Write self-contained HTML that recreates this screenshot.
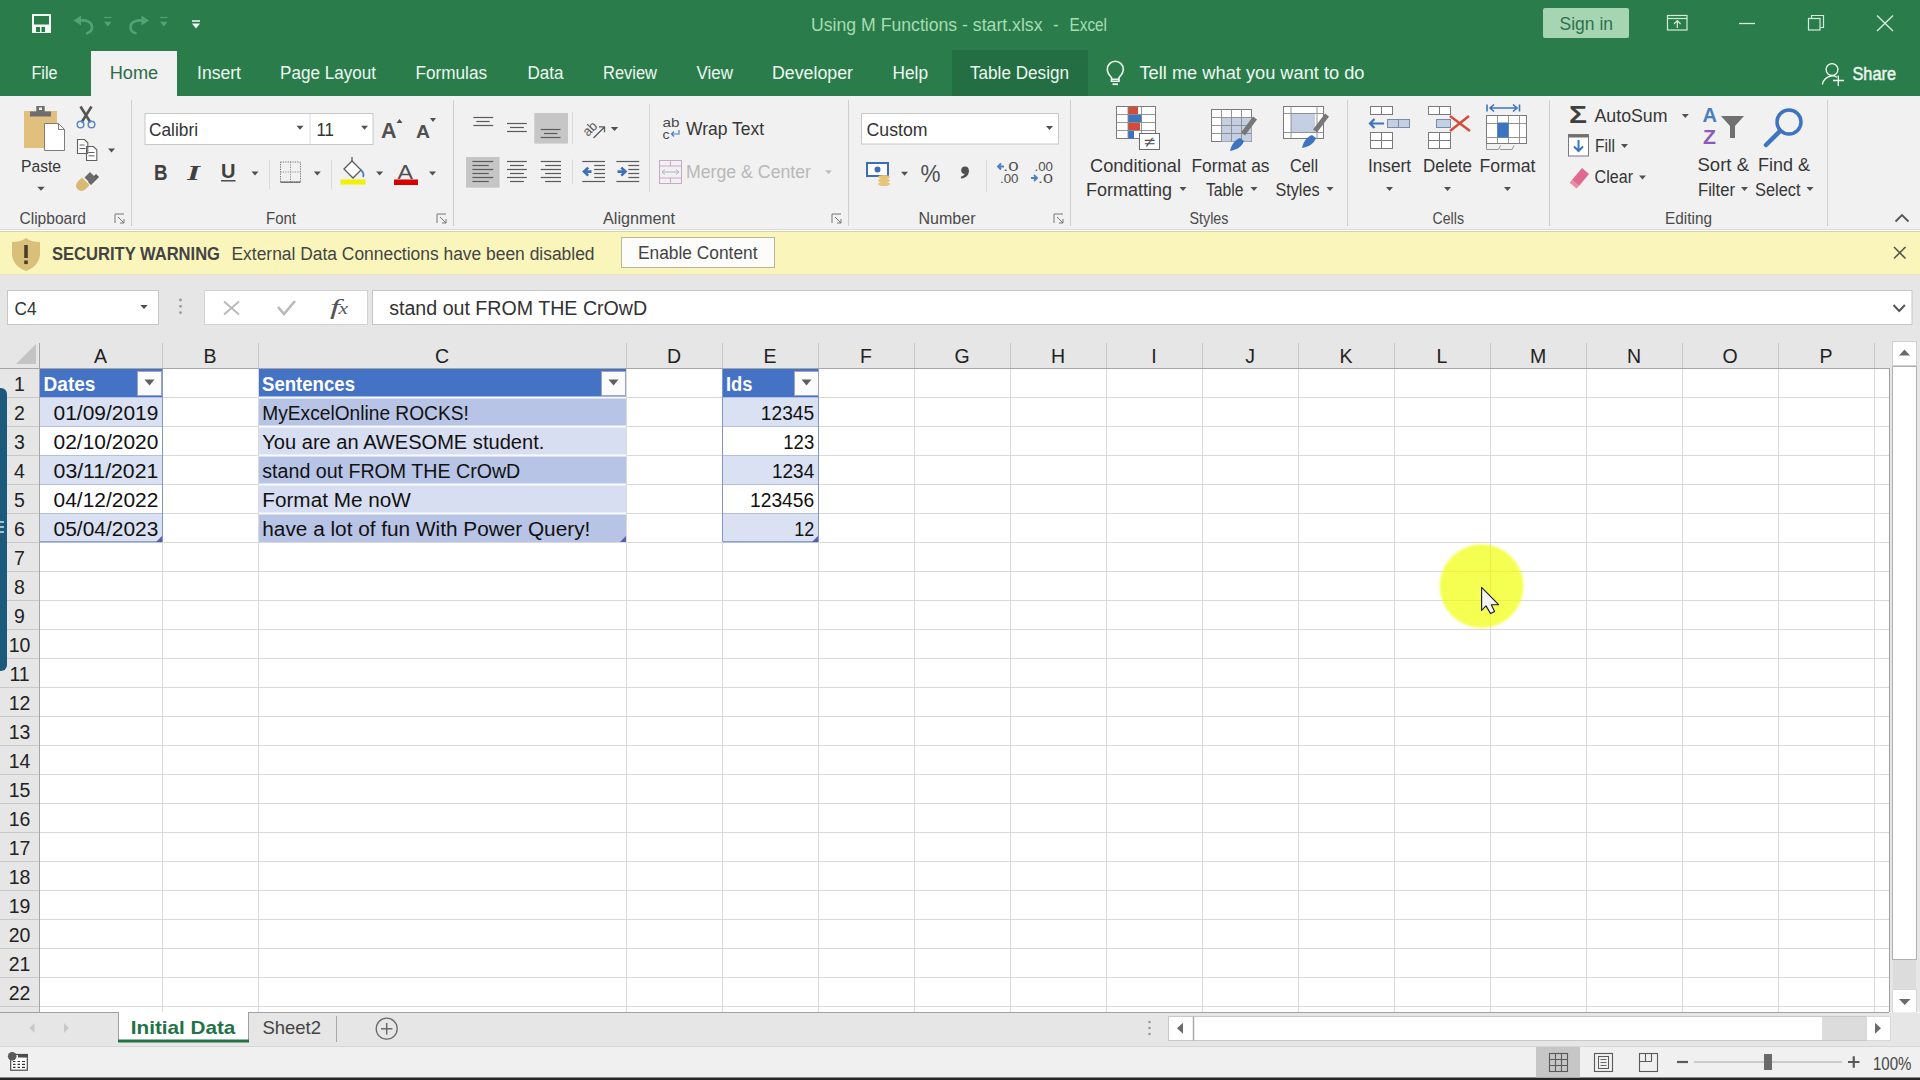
<!DOCTYPE html>
<html><head><meta charset="utf-8"><title>Excel</title>
<style>
html,body{margin:0;padding:0;width:1920px;height:1080px;overflow:hidden;background:#fff;}
svg{position:absolute;left:0;top:0;display:block;font-family:"Liberation Sans", sans-serif;}
</style></head><body>
<svg width="1920" height="1080" viewBox="0 0 1920 1080">
<defs><filter id="soft" x="-10%" y="-10%" width="120%" height="120%"><feGaussianBlur stdDeviation="0.8"/></filter></defs>
<rect x="0" y="0" width="1920" height="96" fill="#2a7d4b" />
<path d="M32 14 h19 v19 h-19 z" fill="#f4fbf6"/>
<rect x="34" y="16" width="15" height="8.5" fill="#2a7d4b" />
<rect x="36" y="27" width="9" height="5" fill="#2a7d4b" />
<rect x="40" y="27" width="1.5" height="5" fill="#f4fbf6" />
<path d="M80 20.5 C86.5 20 92 22 92 27 C92 31 89 33 86 33.5" fill="none" stroke="#52a273" stroke-width="2.6"/>
<path d="M73.5 20.5 L81 15.5 L81 25.5 Z" fill="#52a273"/>
<line x1="104" y1="17.5" x2="111.5" y2="17.5" stroke="#52a273" stroke-width="1.2"/>
<path d="M104.05 21.8 L111.55 21.8 L107.8 26.8 Z" fill="#52a273"/>
<path d="M142.5 20.5 C136 20 130.5 22 130.5 27 C130.5 31 133.5 33 136.5 33.5" fill="none" stroke="#52a273" stroke-width="2.6"/>
<path d="M149 20.5 L141.5 15.5 L141.5 25.5 Z" fill="#52a273"/>
<line x1="160" y1="17.5" x2="167.5" y2="17.5" stroke="#52a273" stroke-width="1.2"/>
<path d="M160.05 21.8 L167.55 21.8 L163.8 26.8 Z" fill="#52a273"/>
<line x1="192" y1="21" x2="200" y2="21" stroke="#f4fbf6" stroke-width="1.5"/>
<path d="M192.0 23.5 L200.0 23.5 L196 28.5 Z" fill="#f4fbf6"/>
<text x="811" y="30.5" font-size="18.5" fill="#a7dcb3" textLength="231.5" lengthAdjust="spacingAndGlyphs">Using M Functions - start.xlsx</text>
<text x="1053" y="30.5" font-size="18.5" fill="#a7dcb3" textLength="5.5" lengthAdjust="spacingAndGlyphs">-</text>
<text x="1069.5" y="30.5" font-size="18.5" fill="#a7dcb3" textLength="37.5" lengthAdjust="spacingAndGlyphs">Excel</text>
<rect x="1543" y="8" width="86" height="30" fill="#a6d5b3" rx="2"/>
<text x="1559.5" y="30" font-size="17.5" fill="#2f704a" textLength="53.5" lengthAdjust="spacingAndGlyphs">Sign in</text>
<rect x="1667.5" y="15.5" width="19.5" height="14.5" fill="none" stroke="#d2ecd9" stroke-width="1.2" />
<line x1="1667.5" y1="18.5" x2="1687" y2="18.5" stroke="#d2ecd9" stroke-width="1.2"/>
<path d="M1677.3 28 v-7 M1674 24 l3.3 -3.3 l3.3 3.3" fill="none" stroke="#d2ecd9" stroke-width="1.2"/>
<line x1="1739" y1="23.5" x2="1755" y2="23.5" stroke="#d2ecd9" stroke-width="1.3"/>
<rect x="1808.5" y="18.5" width="11.5" height="11.5" fill="none" stroke="#d2ecd9" stroke-width="1.2" />
<path d="M1811.5 18.5 v-3 h12 v12 h-3" fill="none" stroke="#d2ecd9" stroke-width="1.2"/>
<path d="M1877 15.5 L1893 31 M1893 15.5 L1877 31" stroke="#d2ecd9" stroke-width="1.4"/>
<rect x="91" y="51" width="86" height="45" fill="#f1f1f1" />
<rect x="952" y="50" width="136" height="46" fill="#236e42" />
<text x="31.5" y="78.7" font-size="17.5" fill="#eef8f1" textLength="26.0" lengthAdjust="spacingAndGlyphs">File</text>
<text x="197" y="78.7" font-size="17.5" fill="#eef8f1" textLength="44.0" lengthAdjust="spacingAndGlyphs">Insert</text>
<text x="280" y="78.7" font-size="17.5" fill="#eef8f1" textLength="96.0" lengthAdjust="spacingAndGlyphs">Page Layout</text>
<text x="415.5" y="78.7" font-size="17.5" fill="#eef8f1" textLength="71.5" lengthAdjust="spacingAndGlyphs">Formulas</text>
<text x="527.5" y="78.7" font-size="17.5" fill="#eef8f1" textLength="36.0" lengthAdjust="spacingAndGlyphs">Data</text>
<text x="603" y="78.7" font-size="17.5" fill="#eef8f1" textLength="54.0" lengthAdjust="spacingAndGlyphs">Review</text>
<text x="696.5" y="78.7" font-size="17.5" fill="#eef8f1" textLength="36.5" lengthAdjust="spacingAndGlyphs">View</text>
<text x="772" y="78.7" font-size="17.5" fill="#eef8f1" textLength="81.0" lengthAdjust="spacingAndGlyphs">Developer</text>
<text x="892.5" y="78.7" font-size="17.5" fill="#eef8f1" textLength="35.5" lengthAdjust="spacingAndGlyphs">Help</text>
<text x="970" y="78.7" font-size="17.5" fill="#eef8f1" textLength="99.0" lengthAdjust="spacingAndGlyphs">Table Design</text>
<text x="109.7" y="78.7" font-size="17.5" fill="#2d6b49" textLength="48.5" lengthAdjust="spacingAndGlyphs">Home</text>
<path d="M1111.5 77.5 C1109 75 1107.3 72.5 1107.3 69.3 A8 8 0 0 1 1123.3 69.3 C1123.3 72.5 1121.5 75 1119 77.5 V81.3 H1111.5 Z M1111.5 79.3 H1119" fill="none" stroke="#eef8f1" stroke-width="1.6"/>
<rect x="1112.5" y="83.3" width="5.5" height="1.8" fill="#eef8f1" />
<text x="1139.5" y="78.7" font-size="17.5" fill="#eef8f1" textLength="225.0" lengthAdjust="spacingAndGlyphs">Tell me what you want to do</text>
<circle cx="1832" cy="69.5" r="5.9" fill="none" stroke="#eef8f1" stroke-width="1.3"/>
<path d="M1822.3 84.5 C1823.5 79.5 1827 76.5 1831.5 76 C1833.5 75.8 1835.5 76.3 1837 77.3" fill="none" stroke="#eef8f1" stroke-width="1.3"/>
<path d="M1833 80.5 h11 M1838.3 75.4 v10.6" stroke="#eef8f1" stroke-width="1.3"/>
<text x="1852.5" y="79.6" font-size="18" fill="#eef8f1" textLength="43.5" lengthAdjust="spacingAndGlyphs" style="stroke:#eef8f1;stroke-width:0.45">Share</text>
<rect x="0" y="96" width="1920" height="134" fill="#f1f1f1" />
<line x1="0" y1="229.5" x2="1920" y2="229.5" stroke="#dcdcdc" stroke-width="1"/>
<line x1="131.5" y1="100" x2="131.5" y2="226" stroke="#cfcfcf" stroke-width="1"/>
<line x1="453.5" y1="100" x2="453.5" y2="226" stroke="#cfcfcf" stroke-width="1"/>
<line x1="848.5" y1="100" x2="848.5" y2="226" stroke="#cfcfcf" stroke-width="1"/>
<line x1="1070.5" y1="100" x2="1070.5" y2="226" stroke="#cfcfcf" stroke-width="1"/>
<line x1="1347.5" y1="100" x2="1347.5" y2="226" stroke="#cfcfcf" stroke-width="1"/>
<line x1="1549.5" y1="100" x2="1549.5" y2="226" stroke="#cfcfcf" stroke-width="1"/>
<line x1="1827.5" y1="100" x2="1827.5" y2="226" stroke="#cfcfcf" stroke-width="1"/>
<text x="19.5" y="223.7" font-size="16.2" fill="#4a4a4a" textLength="66.5" lengthAdjust="spacingAndGlyphs">Clipboard</text>
<text x="266" y="223.7" font-size="16.2" fill="#4a4a4a" textLength="30.0" lengthAdjust="spacingAndGlyphs">Font</text>
<text x="603" y="223.7" font-size="16.2" fill="#4a4a4a" textLength="72.0" lengthAdjust="spacingAndGlyphs">Alignment</text>
<text x="918.5" y="223.7" font-size="16.2" fill="#4a4a4a" textLength="57.0" lengthAdjust="spacingAndGlyphs">Number</text>
<text x="1189.5" y="223.7" font-size="16.2" fill="#4a4a4a" textLength="39.0" lengthAdjust="spacingAndGlyphs">Styles</text>
<text x="1432.5" y="223.7" font-size="16.2" fill="#4a4a4a" textLength="31.5" lengthAdjust="spacingAndGlyphs">Cells</text>
<text x="1665" y="223.7" font-size="16.2" fill="#4a4a4a" textLength="47.0" lengthAdjust="spacingAndGlyphs">Editing</text>
<path d="M115 223 v-9 h9 M118 217 l6 6 M124 219 v4 h-4" fill="none" stroke="#777" stroke-width="1"/>
<path d="M437 223 v-9 h9 M440 217 l6 6 M446 219 v4 h-4" fill="none" stroke="#777" stroke-width="1"/>
<path d="M832 223 v-9 h9 M835 217 l6 6 M841 219 v4 h-4" fill="none" stroke="#777" stroke-width="1"/>
<path d="M1054 223 v-9 h9 M1057 217 l6 6 M1063 219 v4 h-4" fill="none" stroke="#777" stroke-width="1"/>
<path d="M1895.5 221.5 l6.5 -6.5 l6.5 6.5" fill="none" stroke="#555" stroke-width="1.8"/>
<rect x="24" y="111" width="33" height="37" fill="#e1c07e" />
<rect x="30" y="111.5" width="21" height="5" fill="#6e6e6e" />
<rect x="36.3" y="106" width="8.4" height="6" fill="#6e6e6e" />
<rect x="39" y="107.5" width="3" height="2.5" fill="#f1f1f1" />
<path d="M44.5 123.5 h14 l6 6 v21 h-20 z" fill="#fff" stroke="#7d7d7d" stroke-width="1"/>
<path d="M58.5 123.5 v6 h6" fill="none" stroke="#7d7d7d" stroke-width="1"/>
<text x="21" y="172" font-size="17.2" fill="#363636" textLength="40.0" lengthAdjust="spacingAndGlyphs">Paste</text>
<path d="M37.25 186.8 L44.75 186.8 L41 190.8 Z" fill="#505050"/>
<path d="M80.5 106.5 L90.5 122.5 M91.5 106.5 L81.5 122.5" stroke="#555" stroke-width="2.6"/>
<circle cx="80.5" cy="124.5" r="3.3" fill="none" stroke="#5b87c5" stroke-width="1.5"/><circle cx="91.5" cy="124.5" r="3.3" fill="none" stroke="#5b87c5" stroke-width="1.5"/>
<path d="M77.5 139.5 h7 l3.3 3.3 v10.7 h-10.3 z M86.5 146.5 h7 l3.3 3.3 v10.7 h-10.3 z" fill="#fff" stroke="#606060" stroke-width="1.1"/>
<path d="M79.5 145 h5 M79.5 148.5 h6 M88.5 152.5 h6 M88.5 155.8 h6" stroke="#606060" stroke-width="1"/>
<path d="M108.0 148.5 L115.0 148.5 L111.5 152.5 Z" fill="#505050"/>
<path d="M89.5 183.5 l8 -8" stroke="#5a5a5a" stroke-width="4.2"/>
<path d="M84.5 177.5 l5.5 -5.5 l6.5 6.5 l-5.5 5.5 z" fill="#6a6a6a"/>
<path d="M76 186 c0 -3 3 -6 6 -8.5 l7.5 7.5 c-2.5 3 -5.5 6 -8.5 6 c-2 0 -5 -3 -5 -5 z" fill="#d9b873"/>
<rect x="145" y="113.5" width="228" height="31" fill="#fff" stroke="#c8c8c8" stroke-width="1" />
<line x1="310" y1="114" x2="310" y2="144" stroke="#d8d8d8" stroke-width="1"/>
<text x="149" y="135.8" font-size="17.5" fill="#333" textLength="49.0" lengthAdjust="spacingAndGlyphs">Calibri</text>
<path d="M296.5 125.8 L303.5 125.8 L300 129.8 Z" fill="#505050"/>
<text x="316.5" y="135.8" font-size="17.5" fill="#333" textLength="17.5" lengthAdjust="spacingAndGlyphs">11</text>
<path d="M361.0 125.8 L368.0 125.8 L364.5 129.8 Z" fill="#505050"/>
<text x="381" y="137.5" font-size="22" fill="#505050" font-weight="bold" textLength="15.5" lengthAdjust="spacingAndGlyphs">A</text>
<path d="M396.5 123 l3 -4 l3 4 z" fill="#505050"/>
<text x="416" y="137.5" font-size="18.5" fill="#505050" font-weight="bold" textLength="14.0" lengthAdjust="spacingAndGlyphs">A</text>
<path d="M430 118 l3 4 l3 -4 z" fill="#505050"/>
<text x="154" y="180" font-size="21.5" fill="#404040" font-weight="bold" textLength="13.5" lengthAdjust="spacingAndGlyphs">B</text>
<text x="187" y="180" font-size="21.5" fill="#404040" font-weight="bold" font-family='"Liberation Serif", serif' textLength="13.0" lengthAdjust="spacingAndGlyphs" style="font-style:italic">I</text>
<text x="221" y="178" font-size="20" fill="#404040" font-weight="bold" textLength="14.5" lengthAdjust="spacingAndGlyphs">U</text>
<line x1="221" y1="180.8" x2="235.5" y2="180.8" stroke="#404040" stroke-width="1.4"/>
<path d="M251.5 171.5 L258.5 171.5 L255 175.5 Z" fill="#505050"/>
<line x1="269.5" y1="160" x2="269.5" y2="189" stroke="#dadada" stroke-width="1"/>
<rect x="280.5" y="162" width="20" height="20" fill="none" stroke="#707070" stroke-width="1" stroke-dasharray="1.2 1.2"/>
<path d="M290.5 162 v20 M280.5 172 h20" stroke="#909090" stroke-width="1" stroke-dasharray="1.2 1.2"/>
<line x1="280.5" y1="182.2" x2="300.5" y2="182.2" stroke="#606060" stroke-width="1.2"/>
<path d="M313.8 171.5 L320.8 171.5 L317.3 175.5 Z" fill="#505050"/>
<line x1="331.5" y1="160" x2="331.5" y2="189" stroke="#dadada" stroke-width="1"/>
<path d="M344 169 l8 -8 l9 9 l-8 8 z" fill="#fff" stroke="#5a5a5a" stroke-width="1.3"/>
<path d="M352 161 v-4" stroke="#5a5a5a" stroke-width="1.3"/>
<path d="M361 170 c2 2 3 5 2 7" fill="none" stroke="#4a7ebf" stroke-width="1.8"/>
<rect x="340.5" y="179.5" width="25" height="5" fill="#f2f200" />
<path d="M376.1 171.5 L383.1 171.5 L379.6 175.5 Z" fill="#505050"/>
<text x="397.5" y="178.5" font-size="20.5" fill="#505050" textLength="15.5" lengthAdjust="spacingAndGlyphs">A</text>
<rect x="394" y="179.5" width="24" height="5.5" fill="#d90000" />
<path d="M429.0 171.5 L436.0 171.5 L432.5 175.5 Z" fill="#505050"/>
<path d="M473.4 117.5 H493.2" stroke="#5a5a5a" stroke-width="1.2"/><path d="M476.3 121.5 H489.7" stroke="#5a5a5a" stroke-width="1.2"/><path d="M473.4 125.5 H493.2" stroke="#5a5a5a" stroke-width="1.2"/>
<path d="M507 123.5 H526.8" stroke="#5a5a5a" stroke-width="1.2"/><path d="M510 127.5 H523.9" stroke="#5a5a5a" stroke-width="1.2"/><path d="M507 131.5 H526.8" stroke="#5a5a5a" stroke-width="1.2"/>
<rect x="534.3" y="113" width="33.7" height="30.6" fill="#c6c6c6" />
<path d="M540.7 129.5 H560.5" stroke="#5a5a5a" stroke-width="1.2"/><path d="M544 133.5 H557.5" stroke="#5a5a5a" stroke-width="1.2"/><path d="M540.7 137.5 H560.5" stroke="#5a5a5a" stroke-width="1.2"/>
<line x1="572.5" y1="112" x2="572.5" y2="144" stroke="#dadada" stroke-width="1"/>
<text x="588" y="137" font-size="13.5" fill="#5a5a5a" textLength="14.5" lengthAdjust="spacingAndGlyphs" transform="rotate(-45 588 137)">ab</text>
<path d="M593.5 138 L604 127.5 M599 126.8 h5.5 v5.5" fill="none" stroke="#5a5a5a" stroke-width="1.3"/>
<path d="M610.75 127.0 L618.25 127.0 L614.5 131.0 Z" fill="#505050"/>
<line x1="649.5" y1="104" x2="649.5" y2="192" stroke="#dadada" stroke-width="1"/>
<text x="662.5" y="127" font-size="13.5" fill="#4a4a4a" textLength="17.0" lengthAdjust="spacingAndGlyphs">ab</text>
<text x="662.5" y="138.5" font-size="13.5" fill="#4a4a4a" textLength="7.0" lengthAdjust="spacingAndGlyphs">c</text>
<path d="M679 130 v4 h-7 M674 131.5 l-2.5 2.5 l2.5 2.5" fill="none" stroke="#4a7ebf" stroke-width="1.2"/>
<text x="686" y="135" font-size="17.5" fill="#363636" textLength="78.0" lengthAdjust="spacingAndGlyphs">Wrap Text</text>
<rect x="466" y="157" width="33.6" height="30.7" fill="#c6c6c6" />
<path d="M472.4 161.5 H493.2" stroke="#5a5a5a" stroke-width="1.2"/>
<path d="M507 161.5 H526.8" stroke="#5a5a5a" stroke-width="1.2"/>
<path d="M540.7 161.5 H561" stroke="#5a5a5a" stroke-width="1.2"/>
<path d="M582.3 161.5 H605" stroke="#5a5a5a" stroke-width="1.2"/>
<path d="M616.4 161.5 H639.2" stroke="#5a5a5a" stroke-width="1.2"/>
<path d="M472.4 165.5 H488.7" stroke="#5a5a5a" stroke-width="1.2"/>
<path d="M510 165.5 H523.9" stroke="#5a5a5a" stroke-width="1.2"/>
<path d="M545.1 165.5 H561" stroke="#5a5a5a" stroke-width="1.2"/>
<path d="M594.2 165.5 H605" stroke="#5a5a5a" stroke-width="1.2"/>
<path d="M628.3 165.5 H639.2" stroke="#5a5a5a" stroke-width="1.2"/>
<path d="M472.4 169.5 H493.2" stroke="#5a5a5a" stroke-width="1.2"/>
<path d="M507 169.5 H526.8" stroke="#5a5a5a" stroke-width="1.2"/>
<path d="M540.7 169.5 H561" stroke="#5a5a5a" stroke-width="1.2"/>
<path d="M594.2 169.5 H605" stroke="#5a5a5a" stroke-width="1.2"/>
<path d="M628.3 169.5 H639.2" stroke="#5a5a5a" stroke-width="1.2"/>
<path d="M472.4 173.5 H488.7" stroke="#5a5a5a" stroke-width="1.2"/>
<path d="M510 173.5 H523.9" stroke="#5a5a5a" stroke-width="1.2"/>
<path d="M545.1 173.5 H561" stroke="#5a5a5a" stroke-width="1.2"/>
<path d="M594.2 173.5 H605" stroke="#5a5a5a" stroke-width="1.2"/>
<path d="M628.3 173.5 H639.2" stroke="#5a5a5a" stroke-width="1.2"/>
<path d="M472.4 177.5 H493.2" stroke="#5a5a5a" stroke-width="1.2"/>
<path d="M507 177.5 H526.8" stroke="#5a5a5a" stroke-width="1.2"/>
<path d="M540.7 177.5 H561" stroke="#5a5a5a" stroke-width="1.2"/>
<path d="M594.2 177.5 H605" stroke="#5a5a5a" stroke-width="1.2"/>
<path d="M628.3 177.5 H639.2" stroke="#5a5a5a" stroke-width="1.2"/>
<path d="M472.4 181.5 H488.7" stroke="#5a5a5a" stroke-width="1.2"/>
<path d="M510 181.5 H523.9" stroke="#5a5a5a" stroke-width="1.2"/>
<path d="M545.1 181.5 H561" stroke="#5a5a5a" stroke-width="1.2"/>
<path d="M582.3 181.5 H605" stroke="#5a5a5a" stroke-width="1.2"/>
<path d="M616.4 181.5 H639.2" stroke="#5a5a5a" stroke-width="1.2"/>
<line x1="572.5" y1="159.5" x2="572.5" y2="184" stroke="#dadada" stroke-width="1"/>
<path d="M591.5 171.6 h-6 M588.2 167.6 l-4.2 4 l4.2 4" fill="none" stroke="#3f6fb5" stroke-width="2.6"/>
<path d="M617.5 171.6 h6 M621.3 167.6 l4.2 4 l-4.2 4" fill="none" stroke="#3f6fb5" stroke-width="2.6"/>
<rect x="659.5" y="160.5" width="22" height="23" fill="none" stroke="#c8a8c8" stroke-width="1"/>
<path d="M659.5 166 h22 M659.5 178 h22 M670.5 160.5 v5.5 M670.5 178 v5.5" stroke="#c8a8c8" stroke-width="1"/>
<path d="M662 172 h17 M665 169.5 l-3 2.5 l3 2.5 M676 169.5 l3 2.5 l-3 2.5" fill="none" stroke="#b0b0c8" stroke-width="1"/>
<text x="686" y="178.2" font-size="17.5" fill="#b8b8b8" textLength="125.0" lengthAdjust="spacingAndGlyphs">Merge &amp; Center</text>
<path d="M825.0 170.3 L832.0 170.3 L828.5 174.3 Z" fill="#c0c0c0"/>
<rect x="861.5" y="113.5" width="197" height="30.5" fill="#fff" stroke="#c8c8c8" stroke-width="1" />
<text x="866.5" y="135.6" font-size="17.5" fill="#333" textLength="61.0" lengthAdjust="spacingAndGlyphs">Custom</text>
<path d="M1046.0 126.0 L1053.0 126.0 L1049.5 130.0 Z" fill="#505050"/>
<rect x="867" y="163" width="21" height="13" fill="#fff" stroke="#3c6db5" stroke-width="2" />
<circle cx="877.5" cy="169.5" r="3" fill="#3c6db5"/>
<ellipse cx="884" cy="177" rx="6" ry="2" fill="#e8c47a"/><ellipse cx="884" cy="180.5" rx="6" ry="2" fill="#e8c47a"/><ellipse cx="884" cy="184" rx="6" ry="2" fill="#e8c47a"/>
<path d="M901.0 171.8 L908.0 171.8 L904.5 175.8 Z" fill="#505050"/>
<text x="920.5" y="182.2" font-size="24" fill="#505050" textLength="20.0" lengthAdjust="spacingAndGlyphs">%</text>
<circle cx="965" cy="170.3" r="3.8" fill="#505050"/><path d="M968.6 170 C969.5 174.5 966.5 177.8 961.2 178.6 L960.8 176.8 C963.8 175.8 965.5 174 965.5 171.5 Z" fill="#505050"/>
<line x1="986.5" y1="160" x2="986.5" y2="192" stroke="#dadada" stroke-width="1"/>
<text x="1003" y="171.2" font-size="12.5" fill="#505050" textLength="15.5" lengthAdjust="spacingAndGlyphs">.0</text>
<path d="M1004 166.5 h-6 M1001 163.5 l-3 3 l3 3" fill="none" stroke="#4a7ebf" stroke-width="1.8"/>
<text x="1000" y="182.9" font-size="12.5" fill="#505050" textLength="18.5" lengthAdjust="spacingAndGlyphs">.00</text>
<text x="1034.5" y="171.2" font-size="12.5" fill="#505050" textLength="18.5" lengthAdjust="spacingAndGlyphs">.00</text>
<path d="M1031 178 h6 M1034 175 l3 3 l-3 3" fill="none" stroke="#4a7ebf" stroke-width="1.8"/>
<text x="1038" y="182.9" font-size="12.5" fill="#505050" textLength="15.0" lengthAdjust="spacingAndGlyphs">.0</text>
<rect x="1116.5" y="106.5" width="39" height="32" fill="#fff" stroke="#7a7a7a" stroke-width="1"/>
<rect x="1128" y="107" width="10" height="7.5" fill="#d24b3b" />
<rect x="1128" y="114.5" width="14" height="8" fill="#3d74c0" />
<rect x="1128" y="122.5" width="12" height="8" fill="#d24b3b" />
<rect x="1128" y="130.5" width="6" height="8" fill="#3d74c0" />
<path d="M1116.5 114.5 h39 M1116.5 122.5 h39 M1116.5 130.5 h39 M1128 106.5 v32 M1141.5 106.5 v32" stroke="#8a8a8a" stroke-width="0.9"/>
<rect x="1139.5" y="133.5" width="20" height="16" fill="#fff" stroke="#6a6a6a" stroke-width="1"/>
<text x="1144" y="146.5" font-size="15" fill="#505050" textLength="11.0" lengthAdjust="spacingAndGlyphs">≠</text>
<text x="1090" y="171.5" font-size="17.5" fill="#363636" textLength="91.0" lengthAdjust="spacingAndGlyphs">Conditional</text>
<text x="1086" y="195.5" font-size="17.5" fill="#363636" textLength="86.0" lengthAdjust="spacingAndGlyphs">Formatting</text>
<path d="M1179.5 187.0 L1186.5 187.0 L1183 191.0 Z" fill="#505050"/>
<rect x="1211.5" y="109.5" width="40" height="32" fill="#fff" stroke="#7a7a7a" stroke-width="1"/>
<rect x="1221.5" y="117.5" width="30" height="24" fill="#c5cfe3" />
<path d="M1211.5 117.5 h40 M1211.5 125.5 h40 M1211.5 133.5 h40 M1221.5 109.5 v32 M1231.5 109.5 v32 M1241.5 109.5 v32" stroke="#8a8a8a" stroke-width="0.9"/>
<path d="M1255 118 l-12 16" stroke="#777" stroke-width="5"/>
<path d="M1240 138 c-6 2 -9 8 -10 13 c6 -1 12 -4 14 -10 z" fill="#3d74c0"/>
<text x="1191.5" y="171.5" font-size="17.5" fill="#363636" textLength="78.0" lengthAdjust="spacingAndGlyphs">Format as</text>
<text x="1206" y="195.5" font-size="17.5" fill="#363636" textLength="37.5" lengthAdjust="spacingAndGlyphs">Table</text>
<path d="M1250.5 187.0 L1257.5 187.0 L1254 191.0 Z" fill="#505050"/>
<rect x="1283.5" y="106.5" width="40" height="32" fill="#fff" stroke="#7a7a7a" stroke-width="1"/>
<rect x="1291" y="113" width="24" height="20" fill="#c5cfe3" />
<path d="M1283.5 113.5 h40 M1283.5 132.5 h40 M1291 106.5 v32 M1317 106.5 v32" stroke="#8a8a8a" stroke-width="0.9"/>
<path d="M1327 115 l-12 16" stroke="#777" stroke-width="5"/>
<path d="M1312 135 c-6 2 -9 8 -10 13 c6 -1 12 -4 14 -10 z" fill="#3d74c0"/>
<text x="1290" y="171.5" font-size="17.5" fill="#363636" textLength="28.0" lengthAdjust="spacingAndGlyphs">Cell</text>
<text x="1275.5" y="195.5" font-size="17.5" fill="#363636" textLength="44.0" lengthAdjust="spacingAndGlyphs">Styles</text>
<path d="M1326.5 187.0 L1333.5 187.0 L1330 191.0 Z" fill="#505050"/>
<rect x="1370.5" y="106.5" width="22" height="8" fill="#fff" stroke="#7a7a7a" stroke-width="1"/><path d="M1381.5 106.5 v8" stroke="#7a7a7a" stroke-width="1"/>
<rect x="1370.5" y="132.5" width="22" height="16" fill="#fff" stroke="#7a7a7a" stroke-width="1"/><path d="M1381.5 132.5 v16 M1370.5 140.5 h22" stroke="#7a7a7a" stroke-width="1"/>
<rect x="1387.5" y="119.5" width="22" height="8" fill="#c5cfe3" stroke="#7a8aa8" stroke-width="1"/><path d="M1398.5 119.5 v8" stroke="#7a8aa8"/>
<path d="M1384 123.5 h-14 M1374.5 119 l-4.5 4.5 l4.5 4.5" fill="none" stroke="#3d74c0" stroke-width="2.2"/>
<text x="1368" y="171.8" font-size="17.5" fill="#363636" textLength="43.0" lengthAdjust="spacingAndGlyphs">Insert</text>
<path d="M1386.0 187.0 L1393.0 187.0 L1389.5 191.0 Z" fill="#505050"/>
<rect x="1428.5" y="106.5" width="22" height="8" fill="#fff" stroke="#7a7a7a" stroke-width="1"/><path d="M1439.5 106.5 v8" stroke="#7a7a7a" stroke-width="1"/>
<rect x="1428.5" y="132.5" width="22" height="16" fill="#fff" stroke="#7a7a7a" stroke-width="1"/><path d="M1439.5 132.5 v16 M1428.5 140.5 h22" stroke="#7a7a7a" stroke-width="1"/>
<rect x="1436.5" y="119.5" width="14" height="8" fill="#c5cfe3" stroke="#7a8aa8" stroke-width="1"/>
<path d="M1450 116 l20 15 M1469 116 l-19 15" stroke="#d24b3b" stroke-width="2.4"/>
<text x="1423" y="171.8" font-size="17.5" fill="#363636" textLength="49.0" lengthAdjust="spacingAndGlyphs">Delete</text>
<path d="M1444.0 187.0 L1451.0 187.0 L1447.5 191.0 Z" fill="#505050"/>
<rect x="1486.5" y="115.5" width="40" height="28" fill="#fff" stroke="#7a7a7a" stroke-width="1"/>
<path d="M1486.5 123.5 h40 M1486.5 137.5 h40 M1497.5 115.5 v28 M1508.5 115.5 v28 M1519.5 115.5 v28" stroke="#8a8a8a" stroke-width="0.9"/>
<rect x="1497.5" y="122.5" width="11" height="15" fill="#3d74c0" />
<path d="M1486.5 143.5 v6 h12 l2 -4 M1500 149.5 h12 l2 -4" fill="none" stroke="#8a8a8a" stroke-width="0.9"/>
<path d="M1487 104.5 v7 M1519.5 104.5 v7 M1490 108 h27 M1494 104.5 l-4 3.5 l4 3.5 M1513 104.5 l4 3.5 l-4 3.5" fill="none" stroke="#3d74c0" stroke-width="1.6"/>
<text x="1479.5" y="171.8" font-size="17.5" fill="#363636" textLength="56.0" lengthAdjust="spacingAndGlyphs">Format</text>
<path d="M1504.0 187.0 L1511.0 187.0 L1507.5 191.0 Z" fill="#505050"/>
<text x="1569" y="123.3" font-size="23" fill="#404040" font-weight="bold" textLength="18.0" lengthAdjust="spacingAndGlyphs">Σ</text>
<text x="1594.5" y="121.7" font-size="17.5" fill="#363636" textLength="73.0" lengthAdjust="spacingAndGlyphs">AutoSum</text>
<path d="M1681.8 114.0 L1688.8 114.0 L1685.3 118.0 Z" fill="#505050"/>
<rect x="1568.5" y="134.5" width="20" height="21.5" fill="#fff" stroke="#7a7a7a" stroke-width="1"/>
<rect x="1568.5" y="134.5" width="20" height="3" fill="#707070" />
<path d="M1578.5 140 v11 M1574 146.5 l4.5 4.5 l4.5 -4.5" fill="none" stroke="#3d74c0" stroke-width="2"/>
<text x="1595" y="152.4" font-size="17.5" fill="#363636" textLength="20.0" lengthAdjust="spacingAndGlyphs">Fill</text>
<path d="M1621.0 144.0 L1628.0 144.0 L1624.5 148.0 Z" fill="#505050"/>
<path d="M1572 180 l10 -12 l7 6 l-10 12 z" fill="#e06a8f"/><path d="M1572 180 l7 6 l-2.5 2.5 l-7 -6 z" fill="#e88aa8"/>
<text x="1594.5" y="183.1" font-size="17.5" fill="#363636" textLength="38.5" lengthAdjust="spacingAndGlyphs">Clear</text>
<path d="M1639.0 175.5 L1646.0 175.5 L1642.5 179.5 Z" fill="#505050"/>
<text x="1702.5" y="122" font-size="20" fill="#4a7ebf" font-weight="bold" textLength="14.5" lengthAdjust="spacingAndGlyphs">A</text>
<text x="1703" y="143.5" font-size="20" fill="#8a5cb8" font-weight="bold" textLength="13.0" lengthAdjust="spacingAndGlyphs">Z</text>
<path d="M1721 116 h23 l-9 10 v12 h-5 v-12 z" fill="#707070"/>
<text x="1697.5" y="171.2" font-size="17.5" fill="#363636" textLength="51.5" lengthAdjust="spacingAndGlyphs">Sort &amp;</text>
<text x="1698" y="195.5" font-size="17.5" fill="#363636" textLength="37.0" lengthAdjust="spacingAndGlyphs">Filter</text>
<path d="M1741.0 187.0 L1748.0 187.0 L1744.5 191.0 Z" fill="#505050"/>
<circle cx="1789" cy="122" r="12" fill="none" stroke="#3d74c0" stroke-width="3.5"/>
<path d="M1780 131 l-14 14" stroke="#3d74c0" stroke-width="4.5" stroke-linecap="round"/>
<text x="1758" y="171.2" font-size="17.5" fill="#363636" textLength="52.0" lengthAdjust="spacingAndGlyphs">Find &amp;</text>
<text x="1755" y="195.5" font-size="17.5" fill="#363636" textLength="45.5" lengthAdjust="spacingAndGlyphs">Select</text>
<path d="M1806.5 187.0 L1813.5 187.0 L1810 191.0 Z" fill="#505050"/>
<rect x="0" y="231" width="1920" height="44" fill="#faf6bb" />
<line x1="0" y1="231.5" x2="1920" y2="231.5" stroke="#d6d3a6" stroke-width="1"/>
<line x1="0" y1="274.5" x2="1920" y2="274.5" stroke="#e9e6c2" stroke-width="1"/>
<path d="M26 238 c-4 3 -9 4 -14 4 v12 c0 8 6 14 14 17 c8 -3 14 -9 14 -17 v-12 c-5 0 -10 -1 -14 -4 z" fill="#d8bf7a"/>
<rect x="24.2" y="245" width="3.6" height="13" fill="#4b3e28" />
<rect x="24.2" y="260.5" width="3.6" height="3.6" fill="#4b3e28" />
<text x="52" y="259.8" font-size="18" fill="#444" font-weight="bold" textLength="168.0" lengthAdjust="spacingAndGlyphs">SECURITY WARNING</text>
<text x="231.5" y="259.5" font-size="18" fill="#444" textLength="363.0" lengthAdjust="spacingAndGlyphs">External Data Connections have been disabled</text>
<rect x="621.5" y="237.5" width="153" height="30" fill="#fcfcfa" stroke="#b9b69c" stroke-width="1" />
<text x="638" y="258.8" font-size="18" fill="#444" textLength="119.5" lengthAdjust="spacingAndGlyphs">Enable Content</text>
<path d="M1894 247 l11.5 11.5 M1905.5 247 l-11.5 11.5" stroke="#555" stroke-width="1.6"/>
<rect x="0" y="275" width="1920" height="737" fill="#e6e6e6" />
<rect x="7.5" y="290.5" width="151" height="34" fill="#fff" stroke="#c6c6c6" stroke-width="1" />
<text x="14.5" y="314.5" font-size="19" fill="#333" textLength="22.0" lengthAdjust="spacingAndGlyphs">C4</text>
<path d="M140.25 305.0 L147.75 305.0 L144 309.0 Z" fill="#505050"/>
<circle cx="180.5" cy="300" r="1.4" fill="#9a9a9a"/>
<circle cx="180.5" cy="306.3" r="1.4" fill="#9a9a9a"/>
<circle cx="180.5" cy="312.6" r="1.4" fill="#9a9a9a"/>
<rect x="204.5" y="290.5" width="163" height="34" fill="#fff" stroke="#d2d2d2" stroke-width="1" />
<path d="M224 301.5 l15 13 M239 301.5 l-15 13" stroke="#b9b9b9" stroke-width="1.8"/>
<path d="M278 307 l6 7 l11 -13" fill="none" stroke="#b9b9b9" stroke-width="2.6"/>
<text x="330" y="314" font-size="21" fill="#555" font-family='"Liberation Serif", serif' textLength="10.0" lengthAdjust="spacingAndGlyphs" style="font-style:italic">f</text>
<text x="338.5" y="314" font-size="16" fill="#555" font-family='"Liberation Serif", serif' textLength="9.5" lengthAdjust="spacingAndGlyphs" style="font-style:italic">x</text>
<rect x="372.5" y="290.5" width="1539.5" height="34" fill="#fff" stroke="#c6c6c6" stroke-width="1" />
<text x="389.2" y="315.3" font-size="19.5" fill="#333" textLength="258.0" lengthAdjust="spacingAndGlyphs">stand out FROM THE CrOwD</text>
<path d="M1893.5 305 l5.7 6 l5.7 -6" fill="none" stroke="#555" stroke-width="2"/>
<rect x="39" y="368" width="1850" height="644" fill="#fff" />
<line x1="39" y1="397.5" x2="1889" y2="397.5" stroke="#d9d9d9" stroke-width="1"/>
<line x1="39" y1="426.5" x2="1889" y2="426.5" stroke="#d9d9d9" stroke-width="1"/>
<line x1="39" y1="455.5" x2="1889" y2="455.5" stroke="#d9d9d9" stroke-width="1"/>
<line x1="39" y1="484.5" x2="1889" y2="484.5" stroke="#d9d9d9" stroke-width="1"/>
<line x1="39" y1="513.5" x2="1889" y2="513.5" stroke="#d9d9d9" stroke-width="1"/>
<line x1="39" y1="542.5" x2="1889" y2="542.5" stroke="#d9d9d9" stroke-width="1"/>
<line x1="39" y1="571.5" x2="1889" y2="571.5" stroke="#d9d9d9" stroke-width="1"/>
<line x1="39" y1="600.5" x2="1889" y2="600.5" stroke="#d9d9d9" stroke-width="1"/>
<line x1="39" y1="629.5" x2="1889" y2="629.5" stroke="#d9d9d9" stroke-width="1"/>
<line x1="39" y1="658.5" x2="1889" y2="658.5" stroke="#d9d9d9" stroke-width="1"/>
<line x1="39" y1="687.5" x2="1889" y2="687.5" stroke="#d9d9d9" stroke-width="1"/>
<line x1="39" y1="716.5" x2="1889" y2="716.5" stroke="#d9d9d9" stroke-width="1"/>
<line x1="39" y1="745.5" x2="1889" y2="745.5" stroke="#d9d9d9" stroke-width="1"/>
<line x1="39" y1="774.5" x2="1889" y2="774.5" stroke="#d9d9d9" stroke-width="1"/>
<line x1="39" y1="803.5" x2="1889" y2="803.5" stroke="#d9d9d9" stroke-width="1"/>
<line x1="39" y1="832.5" x2="1889" y2="832.5" stroke="#d9d9d9" stroke-width="1"/>
<line x1="39" y1="861.5" x2="1889" y2="861.5" stroke="#d9d9d9" stroke-width="1"/>
<line x1="39" y1="890.5" x2="1889" y2="890.5" stroke="#d9d9d9" stroke-width="1"/>
<line x1="39" y1="919.5" x2="1889" y2="919.5" stroke="#d9d9d9" stroke-width="1"/>
<line x1="39" y1="948.5" x2="1889" y2="948.5" stroke="#d9d9d9" stroke-width="1"/>
<line x1="39" y1="977.5" x2="1889" y2="977.5" stroke="#d9d9d9" stroke-width="1"/>
<line x1="39" y1="1006.5" x2="1889" y2="1006.5" stroke="#d9d9d9" stroke-width="1"/>
<line x1="162.5" y1="368" x2="162.5" y2="1012" stroke="#d9d9d9" stroke-width="1"/>
<line x1="258.5" y1="368" x2="258.5" y2="1012" stroke="#d9d9d9" stroke-width="1"/>
<line x1="626.5" y1="368" x2="626.5" y2="1012" stroke="#d9d9d9" stroke-width="1"/>
<line x1="722.5" y1="368" x2="722.5" y2="1012" stroke="#d9d9d9" stroke-width="1"/>
<line x1="818.5" y1="368" x2="818.5" y2="1012" stroke="#d9d9d9" stroke-width="1"/>
<line x1="914.5" y1="368" x2="914.5" y2="1012" stroke="#d9d9d9" stroke-width="1"/>
<line x1="1010.5" y1="368" x2="1010.5" y2="1012" stroke="#d9d9d9" stroke-width="1"/>
<line x1="1106.5" y1="368" x2="1106.5" y2="1012" stroke="#d9d9d9" stroke-width="1"/>
<line x1="1202.5" y1="368" x2="1202.5" y2="1012" stroke="#d9d9d9" stroke-width="1"/>
<line x1="1298.5" y1="368" x2="1298.5" y2="1012" stroke="#d9d9d9" stroke-width="1"/>
<line x1="1394.5" y1="368" x2="1394.5" y2="1012" stroke="#d9d9d9" stroke-width="1"/>
<line x1="1490.5" y1="368" x2="1490.5" y2="1012" stroke="#d9d9d9" stroke-width="1"/>
<line x1="1586.5" y1="368" x2="1586.5" y2="1012" stroke="#d9d9d9" stroke-width="1"/>
<line x1="1682.5" y1="368" x2="1682.5" y2="1012" stroke="#d9d9d9" stroke-width="1"/>
<line x1="1778.5" y1="368" x2="1778.5" y2="1012" stroke="#d9d9d9" stroke-width="1"/>
<line x1="1874.5" y1="368" x2="1874.5" y2="1012" stroke="#d9d9d9" stroke-width="1"/>
<rect x="40" y="369" width="122" height="28" fill="#4472c4" />
<rect x="259" y="369" width="367" height="28" fill="#4472c4" />
<rect x="723" y="369" width="95" height="28" fill="#4472c4" />
<rect x="40" y="398" width="122" height="28" fill="#d9e1f2" />
<rect x="723" y="398" width="95" height="28" fill="#d9e1f2" />
<rect x="259" y="398" width="367" height="28" fill="#b7c4e6" />
<rect x="259" y="396.5" width="367" height="2" fill="#fafbff" />
<rect x="259" y="427" width="367" height="28" fill="#d8def2" />
<rect x="259" y="425.5" width="367" height="2" fill="#fafbff" />
<rect x="40" y="456" width="122" height="28" fill="#d9e1f2" />
<rect x="723" y="456" width="95" height="28" fill="#d9e1f2" />
<rect x="259" y="456" width="367" height="28" fill="#b7c4e6" />
<rect x="259" y="454.5" width="367" height="2" fill="#fafbff" />
<rect x="259" y="485" width="367" height="28" fill="#d8def2" />
<rect x="259" y="483.5" width="367" height="2" fill="#fafbff" />
<rect x="40" y="514" width="122" height="28" fill="#d9e1f2" />
<rect x="723" y="514" width="95" height="28" fill="#d9e1f2" />
<rect x="259" y="514" width="367" height="28" fill="#b7c4e6" />
<rect x="259" y="512.5" width="367" height="2" fill="#fafbff" />
<line x1="162.5" y1="368" x2="162.5" y2="542" stroke="#8497c9" stroke-width="1"/>
<line x1="722.5" y1="368" x2="722.5" y2="542" stroke="#8497c9" stroke-width="1"/>
<line x1="818.5" y1="368" x2="818.5" y2="542" stroke="#8497c9" stroke-width="1"/>
<line x1="40" y1="397.5" x2="162" y2="397.5" stroke="#b4bfdf" stroke-width="1"/>
<line x1="723" y1="397.5" x2="818" y2="397.5" stroke="#b4bfdf" stroke-width="1"/>
<line x1="40" y1="426.5" x2="162" y2="426.5" stroke="#b4bfdf" stroke-width="1"/>
<line x1="723" y1="426.5" x2="818" y2="426.5" stroke="#b4bfdf" stroke-width="1"/>
<line x1="40" y1="455.5" x2="162" y2="455.5" stroke="#b4bfdf" stroke-width="1"/>
<line x1="723" y1="455.5" x2="818" y2="455.5" stroke="#b4bfdf" stroke-width="1"/>
<line x1="40" y1="484.5" x2="162" y2="484.5" stroke="#b4bfdf" stroke-width="1"/>
<line x1="723" y1="484.5" x2="818" y2="484.5" stroke="#b4bfdf" stroke-width="1"/>
<line x1="40" y1="513.5" x2="162" y2="513.5" stroke="#b4bfdf" stroke-width="1"/>
<line x1="723" y1="513.5" x2="818" y2="513.5" stroke="#b4bfdf" stroke-width="1"/>
<line x1="40" y1="542.5" x2="162" y2="542.5" stroke="#b4bfdf" stroke-width="1"/>
<line x1="723" y1="542.5" x2="818" y2="542.5" stroke="#b4bfdf" stroke-width="1"/>
<line x1="40" y1="541.5" x2="162" y2="541.5" stroke="#8ea0d0" stroke-width="1"/>
<line x1="723" y1="541.5" x2="818" y2="541.5" stroke="#8ea0d0" stroke-width="1"/>
<path d="M162 536 v6 h-6 z" fill="#5b5ea6"/>
<path d="M626 536 v6 h-6 z" fill="#5b5ea6"/>
<path d="M818 536 v6 h-6 z" fill="#5b5ea6"/>
<rect x="137.5" y="371.5" width="24" height="24" fill="#fbfbfb" stroke="#9aa4c4" stroke-width="1" />
<path d="M144.5 379.5 L154.5 379.5 L149.5 385.5 Z" fill="#606060"/>
<rect x="601.5" y="371.5" width="24" height="24" fill="#fbfbfb" stroke="#9aa4c4" stroke-width="1" />
<path d="M608.5 379.5 L618.5 379.5 L613.5 385.5 Z" fill="#606060"/>
<rect x="794.5" y="371.5" width="24" height="24" fill="#fbfbfb" stroke="#9aa4c4" stroke-width="1" />
<path d="M801.5 379.5 L811.5 379.5 L806.5 385.5 Z" fill="#606060"/>
<text x="43.5" y="390.5" font-size="19.5" fill="#fff" font-weight="bold" textLength="52.0" lengthAdjust="spacingAndGlyphs">Dates</text>
<text x="262" y="390.5" font-size="19.5" fill="#fff" font-weight="bold" textLength="93.0" lengthAdjust="spacingAndGlyphs">Sentences</text>
<text x="726" y="390.5" font-size="19.5" fill="#fff" font-weight="bold" textLength="26.5" lengthAdjust="spacingAndGlyphs">Ids</text>
<text x="53.6" y="419.5" font-size="19.5" fill="#111" textLength="104.7" lengthAdjust="spacingAndGlyphs">01/09/2019</text>
<text x="262.3" y="419.5" font-size="19.5" fill="#111" textLength="206.5" lengthAdjust="spacingAndGlyphs">MyExcelOnline ROCKS!</text>
<text x="760.8" y="419.5" font-size="19.5" fill="#111" textLength="53.4" lengthAdjust="spacingAndGlyphs">12345</text>
<text x="53.6" y="448.5" font-size="19.5" fill="#111" textLength="104.7" lengthAdjust="spacingAndGlyphs">02/10/2020</text>
<text x="262.3" y="448.5" font-size="19.5" fill="#111" textLength="282.0" lengthAdjust="spacingAndGlyphs">You are an AWESOME student.</text>
<text x="783.3" y="448.5" font-size="19.5" fill="#111" textLength="30.9" lengthAdjust="spacingAndGlyphs">123</text>
<text x="53.6" y="477.5" font-size="19.5" fill="#111" textLength="104.7" lengthAdjust="spacingAndGlyphs">03/11/2021</text>
<text x="262.3" y="477.5" font-size="19.5" fill="#111" textLength="258.0" lengthAdjust="spacingAndGlyphs">stand out FROM THE CrOwD</text>
<text x="772" y="477.5" font-size="19.5" fill="#111" textLength="42.2" lengthAdjust="spacingAndGlyphs">1234</text>
<text x="53.6" y="506.5" font-size="19.5" fill="#111" textLength="104.7" lengthAdjust="spacingAndGlyphs">04/12/2022</text>
<text x="262.3" y="506.5" font-size="19.5" fill="#111" textLength="148.5" lengthAdjust="spacingAndGlyphs">Format Me noW</text>
<text x="750" y="506.5" font-size="19.5" fill="#111" textLength="64.2" lengthAdjust="spacingAndGlyphs">123456</text>
<text x="53.6" y="535.5" font-size="19.5" fill="#111" textLength="104.7" lengthAdjust="spacingAndGlyphs">05/04/2023</text>
<text x="262.3" y="535.5" font-size="19.5" fill="#111" textLength="328.0" lengthAdjust="spacingAndGlyphs">have a lot of fun With Power Query!</text>
<text x="794.2" y="535.5" font-size="19.5" fill="#111" textLength="20.0" lengthAdjust="spacingAndGlyphs">12</text>
<line x1="0" y1="368.5" x2="1889" y2="368.5" stroke="#a6a6a6" stroke-width="1"/>
<line x1="39.5" y1="343" x2="39.5" y2="1012" stroke="#a6a6a6" stroke-width="1"/>
<path d="M36 344 v20 h-20 z" fill="#c4c4c4"/>
<line x1="162.5" y1="343" x2="162.5" y2="368" stroke="#c8c8c8" stroke-width="1"/>
<text x="100.5" y="363" font-size="19.5" fill="#222" text-anchor="middle">A</text>
<line x1="258.5" y1="343" x2="258.5" y2="368" stroke="#c8c8c8" stroke-width="1"/>
<text x="210.0" y="363" font-size="19.5" fill="#222" text-anchor="middle">B</text>
<line x1="626.5" y1="343" x2="626.5" y2="368" stroke="#c8c8c8" stroke-width="1"/>
<text x="442.0" y="363" font-size="19.5" fill="#222" text-anchor="middle">C</text>
<line x1="722.5" y1="343" x2="722.5" y2="368" stroke="#c8c8c8" stroke-width="1"/>
<text x="674.0" y="363" font-size="19.5" fill="#222" text-anchor="middle">D</text>
<line x1="818.5" y1="343" x2="818.5" y2="368" stroke="#c8c8c8" stroke-width="1"/>
<text x="770.0" y="363" font-size="19.5" fill="#222" text-anchor="middle">E</text>
<line x1="914.5" y1="343" x2="914.5" y2="368" stroke="#c8c8c8" stroke-width="1"/>
<text x="866.0" y="363" font-size="19.5" fill="#222" text-anchor="middle">F</text>
<line x1="1010.5" y1="343" x2="1010.5" y2="368" stroke="#c8c8c8" stroke-width="1"/>
<text x="962.0" y="363" font-size="19.5" fill="#222" text-anchor="middle">G</text>
<line x1="1106.5" y1="343" x2="1106.5" y2="368" stroke="#c8c8c8" stroke-width="1"/>
<text x="1058.0" y="363" font-size="19.5" fill="#222" text-anchor="middle">H</text>
<line x1="1202.5" y1="343" x2="1202.5" y2="368" stroke="#c8c8c8" stroke-width="1"/>
<text x="1154.0" y="363" font-size="19.5" fill="#222" text-anchor="middle">I</text>
<line x1="1298.5" y1="343" x2="1298.5" y2="368" stroke="#c8c8c8" stroke-width="1"/>
<text x="1250.0" y="363" font-size="19.5" fill="#222" text-anchor="middle">J</text>
<line x1="1394.5" y1="343" x2="1394.5" y2="368" stroke="#c8c8c8" stroke-width="1"/>
<text x="1346.0" y="363" font-size="19.5" fill="#222" text-anchor="middle">K</text>
<line x1="1490.5" y1="343" x2="1490.5" y2="368" stroke="#c8c8c8" stroke-width="1"/>
<text x="1442.0" y="363" font-size="19.5" fill="#222" text-anchor="middle">L</text>
<line x1="1586.5" y1="343" x2="1586.5" y2="368" stroke="#c8c8c8" stroke-width="1"/>
<text x="1538.0" y="363" font-size="19.5" fill="#222" text-anchor="middle">M</text>
<line x1="1682.5" y1="343" x2="1682.5" y2="368" stroke="#c8c8c8" stroke-width="1"/>
<text x="1634.0" y="363" font-size="19.5" fill="#222" text-anchor="middle">N</text>
<line x1="1778.5" y1="343" x2="1778.5" y2="368" stroke="#c8c8c8" stroke-width="1"/>
<text x="1730.0" y="363" font-size="19.5" fill="#222" text-anchor="middle">O</text>
<line x1="1874.5" y1="343" x2="1874.5" y2="368" stroke="#c8c8c8" stroke-width="1"/>
<text x="1826.0" y="363" font-size="19.5" fill="#222" text-anchor="middle">P</text>
<line x1="0" y1="397.5" x2="39" y2="397.5" stroke="#c8c8c8" stroke-width="1"/>
<text x="19.5" y="390.5" font-size="19.5" fill="#222" text-anchor="middle">1</text>
<line x1="0" y1="426.5" x2="39" y2="426.5" stroke="#c8c8c8" stroke-width="1"/>
<text x="19.5" y="419.5" font-size="19.5" fill="#222" text-anchor="middle">2</text>
<line x1="0" y1="455.5" x2="39" y2="455.5" stroke="#c8c8c8" stroke-width="1"/>
<text x="19.5" y="448.5" font-size="19.5" fill="#222" text-anchor="middle">3</text>
<line x1="0" y1="484.5" x2="39" y2="484.5" stroke="#c8c8c8" stroke-width="1"/>
<text x="19.5" y="477.5" font-size="19.5" fill="#222" text-anchor="middle">4</text>
<line x1="0" y1="513.5" x2="39" y2="513.5" stroke="#c8c8c8" stroke-width="1"/>
<text x="19.5" y="506.5" font-size="19.5" fill="#222" text-anchor="middle">5</text>
<line x1="0" y1="542.5" x2="39" y2="542.5" stroke="#c8c8c8" stroke-width="1"/>
<text x="19.5" y="535.5" font-size="19.5" fill="#222" text-anchor="middle">6</text>
<line x1="0" y1="571.5" x2="39" y2="571.5" stroke="#c8c8c8" stroke-width="1"/>
<text x="19.5" y="564.5" font-size="19.5" fill="#222" text-anchor="middle">7</text>
<line x1="0" y1="600.5" x2="39" y2="600.5" stroke="#c8c8c8" stroke-width="1"/>
<text x="19.5" y="593.5" font-size="19.5" fill="#222" text-anchor="middle">8</text>
<line x1="0" y1="629.5" x2="39" y2="629.5" stroke="#c8c8c8" stroke-width="1"/>
<text x="19.5" y="622.5" font-size="19.5" fill="#222" text-anchor="middle">9</text>
<line x1="0" y1="658.5" x2="39" y2="658.5" stroke="#c8c8c8" stroke-width="1"/>
<text x="19.5" y="651.5" font-size="19.5" fill="#222" text-anchor="middle">10</text>
<line x1="0" y1="687.5" x2="39" y2="687.5" stroke="#c8c8c8" stroke-width="1"/>
<text x="19.5" y="680.5" font-size="19.5" fill="#222" text-anchor="middle">11</text>
<line x1="0" y1="716.5" x2="39" y2="716.5" stroke="#c8c8c8" stroke-width="1"/>
<text x="19.5" y="709.5" font-size="19.5" fill="#222" text-anchor="middle">12</text>
<line x1="0" y1="745.5" x2="39" y2="745.5" stroke="#c8c8c8" stroke-width="1"/>
<text x="19.5" y="738.5" font-size="19.5" fill="#222" text-anchor="middle">13</text>
<line x1="0" y1="774.5" x2="39" y2="774.5" stroke="#c8c8c8" stroke-width="1"/>
<text x="19.5" y="767.5" font-size="19.5" fill="#222" text-anchor="middle">14</text>
<line x1="0" y1="803.5" x2="39" y2="803.5" stroke="#c8c8c8" stroke-width="1"/>
<text x="19.5" y="796.5" font-size="19.5" fill="#222" text-anchor="middle">15</text>
<line x1="0" y1="832.5" x2="39" y2="832.5" stroke="#c8c8c8" stroke-width="1"/>
<text x="19.5" y="825.5" font-size="19.5" fill="#222" text-anchor="middle">16</text>
<line x1="0" y1="861.5" x2="39" y2="861.5" stroke="#c8c8c8" stroke-width="1"/>
<text x="19.5" y="854.5" font-size="19.5" fill="#222" text-anchor="middle">17</text>
<line x1="0" y1="890.5" x2="39" y2="890.5" stroke="#c8c8c8" stroke-width="1"/>
<text x="19.5" y="883.5" font-size="19.5" fill="#222" text-anchor="middle">18</text>
<line x1="0" y1="919.5" x2="39" y2="919.5" stroke="#c8c8c8" stroke-width="1"/>
<text x="19.5" y="912.5" font-size="19.5" fill="#222" text-anchor="middle">19</text>
<line x1="0" y1="948.5" x2="39" y2="948.5" stroke="#c8c8c8" stroke-width="1"/>
<text x="19.5" y="941.5" font-size="19.5" fill="#222" text-anchor="middle">20</text>
<line x1="0" y1="977.5" x2="39" y2="977.5" stroke="#c8c8c8" stroke-width="1"/>
<text x="19.5" y="970.5" font-size="19.5" fill="#222" text-anchor="middle">21</text>
<line x1="0" y1="1006.5" x2="39" y2="1006.5" stroke="#c8c8c8" stroke-width="1"/>
<text x="19.5" y="999.5" font-size="19.5" fill="#222" text-anchor="middle">22</text>
<line x1="1889.5" y1="368" x2="1889.5" y2="1012" stroke="#a0a0a0" stroke-width="1"/>
<line x1="0" y1="1012.5" x2="1889" y2="1012.5" stroke="#a0a0a0" stroke-width="1"/>
<rect x="1890" y="341" width="30" height="671" fill="#e6e6e6" />
<rect x="1892.5" y="341.5" width="24" height="24" fill="#fff" stroke="#d0d0d0" stroke-width="1" />
<path d="M1899 355.5 h11 l-5.5 -6 z" fill="#6a6a6a"/>
<rect x="1892.5" y="366.5" width="24" height="593" fill="#fff" stroke="#b0b0b0" stroke-width="1" />
<rect x="1893" y="960" width="23" height="29.5" fill="#dcdcdc" />
<rect x="1892.5" y="989.5" width="24" height="23.5" fill="#fff" stroke="#d8d8d8" stroke-width="1" />
<path d="M1899 999 h11.5 l-5.75 6 z" fill="#6a6a6a"/>
<path d="M0 388 h1 a6 6 0 0 1 6 6 v271 a6 6 0 0 1 -6 6 h-1 z" fill="#1b5a7a"/>
<path d="M0 522 h4 M0 527 h4 M0 532 h4" stroke="#cfe3ee" stroke-width="1.5"/>
<rect x="0" y="1013" width="1920" height="33" fill="#e6e6e6" />
<path d="M29.5 1028 l5 -5 v10 z" fill="#c8c8c8"/><path d="M69 1028 l-5 -5 v10 z" fill="#c8c8c8"/>
<line x1="0" y1="1012.5" x2="118" y2="1012.5" stroke="#a0a0a0" stroke-width="1"/>
<rect x="118.5" y="1012" width="130" height="30" fill="#fff" />
<line x1="118.5" y1="1012" x2="118.5" y2="1042" stroke="#a0a0a0" stroke-width="1"/>
<line x1="248.5" y1="1012" x2="248.5" y2="1042" stroke="#a0a0a0" stroke-width="1"/>
<rect x="118" y="1039.5" width="131" height="3" fill="#217346" />
<text x="130.8" y="1033.5" font-size="19" fill="#217346" font-weight="bold" textLength="104.5" lengthAdjust="spacingAndGlyphs">Initial Data</text>
<text x="262.5" y="1033.5" font-size="19" fill="#444" textLength="58.5" lengthAdjust="spacingAndGlyphs">Sheet2</text>
<line x1="336.5" y1="1016" x2="336.5" y2="1042" stroke="#a8a8a8" stroke-width="1"/>
<circle cx="386.7" cy="1028.7" r="10.5" fill="none" stroke="#6a6a6a" stroke-width="1.3"/>
<path d="M386.7 1023 v11.4 M381 1028.7 h11.4" stroke="#6a6a6a" stroke-width="1.5"/>
<circle cx="1149.5" cy="1022" r="1.3" fill="#999"/>
<circle cx="1149.5" cy="1028" r="1.3" fill="#999"/>
<circle cx="1149.5" cy="1034" r="1.3" fill="#999"/>
<rect x="1168.5" y="1016.5" width="722" height="24" fill="#fff" stroke="#c8c8c8" stroke-width="1" />
<line x1="1193.5" y1="1016.5" x2="1193.5" y2="1040.5" stroke="#a8a8a8" stroke-width="1.5"/>
<path d="M1177 1028.3 l6 -5.5 v11 z" fill="#6a6a6a"/>
<rect x="1822" y="1017" width="45" height="23" fill="#dcdcdc" />
<rect x="1866.5" y="1016.5" width="24" height="24" fill="#fff" stroke="#d8d8d8" stroke-width="1" />
<path d="M1881 1028.3 l-6 -5.5 v11 z" fill="#6a6a6a"/>
<line x1="0" y1="1046.5" x2="1920" y2="1046.5" stroke="#d6d6d6" stroke-width="1"/>
<rect x="0" y="1047" width="1920" height="31" fill="#f0f0f0" />
<rect x="0" y="1077.5" width="1920" height="2.5" fill="#262626" />
<rect x="10.7" y="1054.5" width="16.6" height="15.7" fill="#fff" stroke="#4a4a4a" stroke-width="1.2"/>
<rect x="18" y="1054" width="9.8" height="3.5" fill="#4a4a4a" />
<circle cx="12.2" cy="1056.3" r="4.3" fill="#5a5a5a"/>
<path d="M13 1061.5 h2.5 M17.5 1061.5 h2.5 M22 1061.5 h3 M13 1064.4 h2.5 M17.5 1064.4 h2.5 M22 1064.4 h3 M13 1067.4 h2.5 M17.5 1067.4 h2.5 M22 1067.4 h3" stroke="#333" stroke-width="1.2"/>
<rect x="1536" y="1047" width="44" height="30.5" fill="#c6c6c6" />
<rect x="1549.5" y="1053.5" width="18" height="18" fill="none" stroke="#5a5a5a" stroke-width="1.1"/><path d="M1555.5 1053.5 v18 M1561.5 1053.5 v18 M1549.5 1059.5 h18 M1549.5 1065.5 h18" stroke="#5a5a5a" stroke-width="1.1"/>
<rect x="1594.5" y="1053.5" width="18" height="18" fill="none" stroke="#5a5a5a" stroke-width="1.1"/><rect x="1598.5" y="1056.5" width="10" height="12" fill="none" stroke="#5a5a5a" stroke-width="1"/><path d="M1600.5 1059.5 h6 M1600.5 1062.5 h6 M1600.5 1065.5 h6" stroke="#5a5a5a" stroke-width="0.9"/>
<rect x="1639.5" y="1053.5" width="18" height="18" fill="none" stroke="#5a5a5a" stroke-width="1.1"/><path d="M1645.5 1053.5 v8 M1651.5 1053.5 v8 M1639.5 1061.5 h12" stroke="#5a5a5a" stroke-width="1.1"/>
<line x1="1677" y1="1062" x2="1688" y2="1062" stroke="#5a5a5a" stroke-width="2.2"/>
<line x1="1694" y1="1062" x2="1842" y2="1062" stroke="#a6a6a6" stroke-width="1.2"/>
<rect x="1764" y="1054" width="8" height="16" fill="#6a6a6a" />
<path d="M1848 1062 h11.5 M1853.75 1056.25 v11.5" stroke="#5a5a5a" stroke-width="2.2"/>
<text x="1873" y="1070" font-size="18" fill="#444" textLength="38.5" lengthAdjust="spacingAndGlyphs">100%</text>
<circle cx="1481.6" cy="586.1" r="41.9" fill="#f0ff00" fill-opacity="0.68" filter="url(#soft)"/>
<path d="M1481.6 587.4 V610.4 L1486 605.9 L1490.6 613.6 L1494.6 611.6 L1491.3 604.7 L1498.6 604.7 Z" fill="#f4f4f4" stroke="#1a1a1a" stroke-width="1.1" stroke-linejoin="round"/>
</svg>
</body></html>
